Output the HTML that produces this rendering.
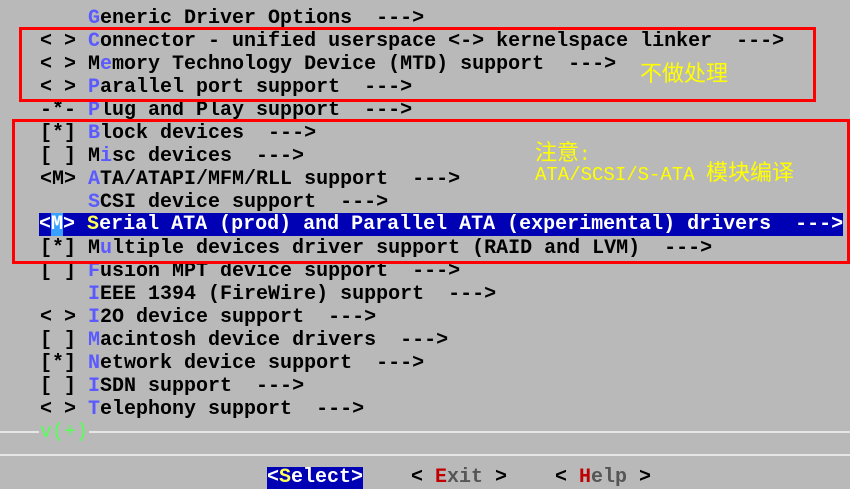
<!DOCTYPE html>
<html><head><meta charset="utf-8"><style>
body{margin:0;width:850px;height:489px;background:#b9b9b9;overflow:hidden;position:relative;font-family:"Liberation Mono",monospace;}
.l{position:absolute;left:40px;font-size:20px;line-height:23px;height:23px;white-space:pre;font-weight:bold;color:#000;}
.k{color:#5a5aff}
.hl{background:#0000b4;color:#fff;width:804px;left:39px}
.hl .y{color:#ffff55}
.mk{background:#3aa0ff;color:#fff}
.box{position:absolute;border:3px solid #ff0000;box-sizing:border-box}
.cn{position:absolute;color:#ffff00;font-size:19px;line-height:20px;font-family:"Liberation Mono","WenQuanYi Zen Hei",monospace;white-space:pre}
.cn b{font-weight:normal;font-size:22px;font-family:"WenQuanYi Zen Hei",sans-serif}
.hr{position:absolute;left:0;width:850px;height:2px;background:#e6e6e6}
.btn{position:absolute;top:467px;font-size:20px;line-height:22px;white-space:pre;font-weight:bold}
</style></head><body>
<div class="l" style="top:7px">    <span class="k">G</span>eneric Driver Options  ---&gt;</div>
<div class="l" style="top:30px">&lt; &gt; <span class="k">C</span>onnector - unified userspace &lt;-&gt; kernelspace linker  ---&gt;</div>
<div class="l" style="top:53px">&lt; &gt; M<span class="k">e</span>mory Technology Device (MTD) support  ---&gt;</div>
<div class="l" style="top:76px">&lt; &gt; <span class="k">P</span>arallel port support  ---&gt;</div>
<div class="l" style="top:99px">-*- <span class="k">P</span>lug and Play support  ---&gt;</div>
<div class="l" style="top:122px">[*] <span class="k">B</span>lock devices  ---&gt;</div>
<div class="l" style="top:145px">[ ] M<span class="k">i</span>sc devices  ---&gt;</div>
<div class="l" style="top:168px">&lt;M&gt; <span class="k">A</span>TA/ATAPI/MFM/RLL support  ---&gt;</div>
<div class="l" style="top:191px">    <span class="k">S</span>CSI device support  ---&gt;</div>
<div class="l hl" style="top:213px">&lt;<span class="mk">M</span>&gt; <span class="y">S</span>erial ATA (prod) and Parallel ATA (experimental) drivers  ---&gt;</div>
<div class="l" style="top:237px">[*] M<span class="k">u</span>ltiple devices driver support (RAID and LVM)  ---&gt;</div>
<div class="l" style="top:260px">[ ] <span class="k">F</span>usion MPT device support  ---&gt;</div>
<div class="l" style="top:283px">    <span class="k">I</span>EEE 1394 (FireWire) support  ---&gt;</div>
<div class="l" style="top:306px">&lt; &gt; <span class="k">I</span>2O device support  ---&gt;</div>
<div class="l" style="top:329px">[ ] <span class="k">M</span>acintosh device drivers  ---&gt;</div>
<div class="l" style="top:352px">[*] <span class="k">N</span>etwork device support  ---&gt;</div>
<div class="l" style="top:375px">[ ] <span class="k">I</span>SDN support  ---&gt;</div>
<div class="l" style="top:398px">&lt; &gt; <span class="k">T</span>elephony support  ---&gt;</div>
<div class="hr" style="top:431px"></div>
<div class="hr" style="top:454px"></div>
<div class="l" style="top:421px;background:#b9b9b9;color:#55ff55;font-weight:normal;padding:0 1px;left:39px">v(+)</div>
<div class="btn" style="left:267px;background:#0000b4;color:#fff">&lt;<span style="color:#ffff55">S</span>elect&gt;</div>
<div class="btn" style="left:411px;color:#000">&lt; <span style="color:#c00000">E</span><span style="color:#555">xit</span> &gt;</div>
<div class="btn" style="left:555px;color:#000">&lt; <span style="color:#c00000">H</span><span style="color:#555">elp</span> &gt;</div>
<div class="box" style="left:19px;top:27px;width:797px;height:75px"></div>
<div class="box" style="left:12px;top:119px;width:838px;height:145px"></div>
<div class="cn" style="left:640px;top:64px"><b>不做处理</b></div>
<div class="cn" style="left:535px;top:143px"><b>注意</b>:</div>
<div class="cn" style="left:535px;top:163px">ATA/SCSI/S-ATA <b>模块编译</b></div>
</body></html>
